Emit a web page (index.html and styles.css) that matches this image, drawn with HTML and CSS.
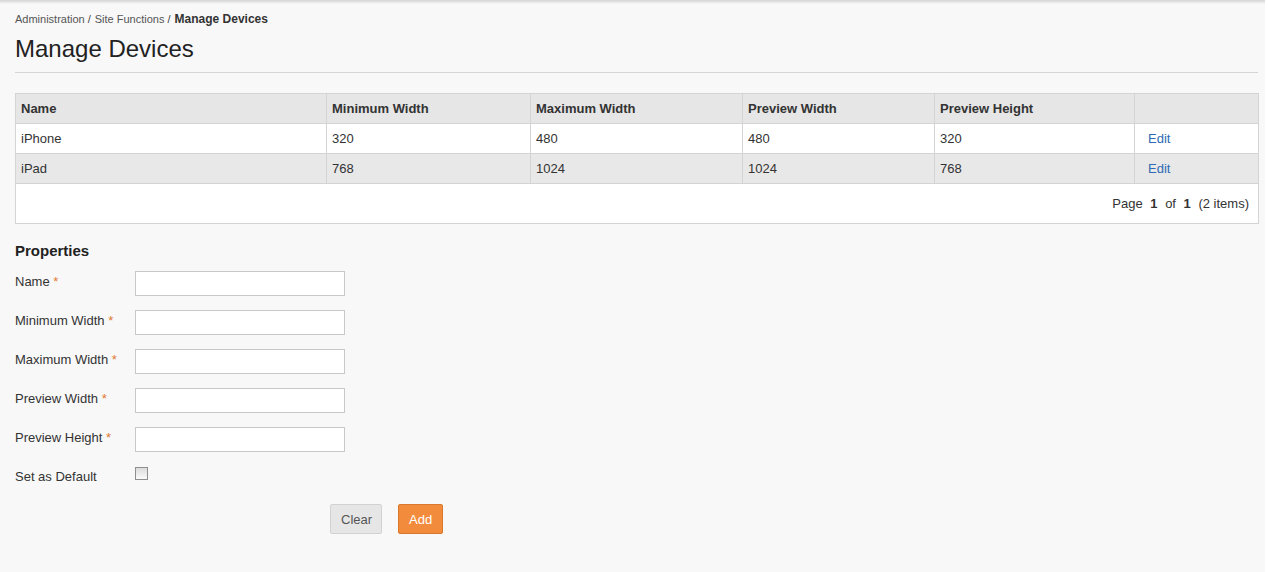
FILE: index.html
```html
<!DOCTYPE html>
<html>
<head>
<meta charset="utf-8">
<title>Manage Devices</title>
<link rel="stylesheet" href="styles.css">
</head>
<body>
<div class="page">
  <div class="crumbs"><a class="crumb">Administration</a><span class="sep">/</span><a class="crumb">Site Functions</a><span class="sep">/</span><span class="crumb-current">Manage Devices</span></div>
  <h1 class="title">Manage Devices</h1>
  <div class="rule"></div>

  <table class="grid">
    <thead>
      <tr>
        <th class="c1">Name</th>
        <th class="c2">Minimum Width</th>
        <th class="c3">Maximum Width</th>
        <th class="c4">Preview Width</th>
        <th class="c5">Preview Height</th>
        <th class="c6"></th>
      </tr>
    </thead>
    <tbody>
      <tr class="odd">
        <td>iPhone</td><td>320</td><td>480</td><td>480</td><td>320</td><td class="act"><a class="edit">Edit</a></td>
      </tr>
      <tr class="even">
        <td>iPad</td><td>768</td><td>1024</td><td>1024</td><td>768</td><td class="act"><a class="edit">Edit</a></td>
      </tr>
    </tbody>
    <tfoot>
      <tr>
        <td colspan="6" class="pager">Page <b>1</b> of <b>1</b> (2 items)</td>
      </tr>
    </tfoot>
  </table>

  <h2 class="section">Properties</h2>
  <div class="form">
    <div class="row"><label class="lbl">Name <span class="req">*</span></label><input class="field" type="text"></div>
    <div class="row"><label class="lbl">Minimum Width <span class="req">*</span></label><input class="field" type="text"></div>
    <div class="row"><label class="lbl">Maximum Width <span class="req">*</span></label><input class="field" type="text"></div>
    <div class="row"><label class="lbl">Preview Width <span class="req">*</span></label><input class="field" type="text"></div>
    <div class="row"><label class="lbl">Preview Height <span class="req">*</span></label><input class="field" type="text"></div>
    <div class="row check-row"><label class="lbl">Set as Default</label><span class="check"></span></div>
    <div class="actions">
      <button class="btn btn-clear">Clear</button>
      <button class="btn btn-add">Add</button>
    </div>
  </div>
</div>
</body>
</html>
```

FILE: styles.css
```css
html, body {
  margin: 0;
  padding: 0;
  background: #ffffff;
}
body {
  font-family: "Liberation Sans", Arial, sans-serif;
  color: #333;
}
.page {
  width: 1265px;
  min-height: 572px;
  box-sizing: border-box;
  padding: 12px 7px 0 15px;
  background: #f8f8f8 linear-gradient(#d4d4d4 0, #e6e6e6 2px, #f8f8f8 4px) no-repeat;
  background-size: 100% 4px;
  background-color: #f8f8f8;
}
.crumbs {
  font-size: 11px;
  line-height: 14px;
  height: 14px;
  color: #555;
}
.crumb { color: #555; }
.sep { margin: 0 4px 0 3px; color: #444; }
.crumb-current { font-weight: bold; color: #333; font-size: 12px; }
.title {
  margin: 9px 0 0 0;
  font-size: 24px;
  line-height: 28px;
  font-weight: normal;
  color: #222;
}
.rule {
  margin-top: 9px;
  border-top: 1px solid #d5d5d5;
}
.grid {
  margin-top: 20px;
  width: 1243px;
  border-collapse: collapse;
  font-size: 13px;
  table-layout: fixed;
}
.grid th, .grid td {
  border: 1px solid #d4d4d4;
  height: 30px;
  padding: 0 5px;
  text-align: left;
  color: #333;
  box-sizing: border-box;
}
.grid th { background: #e6e6e6; font-weight: bold; }
.c1 { width: 311px; }
.c2 { width: 204px; }
.c3 { width: 212px; }
.c4 { width: 192px; }
.c5 { width: 200px; }
.c6 { width: 124px; }
.odd td { background: #ffffff; }
.even td { background: #e8e8e8; }
.grid td.act { padding-left: 13px; }
.edit { color: #2e6bb3; }
.grid td.pager {
  background: #fff;
  height: 40px;
  text-align: right;
  padding-right: 9px;
  color: #333;
}
.pager b { margin: 0 4px; }
.section {
  margin: 18px 0 0 0;
  font-size: 15px;
  line-height: 18px;
  font-weight: bold;
  color: #222;
}
.form {
  margin-top: 11px;
  display: flex;
  flex-direction: column;
  gap: 14px;
}
.row {
  display: flex;
  align-items: center;
  height: 25px;
}
.lbl {
  width: 120px;
  font-size: 13px;
  color: #333;
  margin-top: -5px;
}
.req { color: #e07a30; }
.field {
  width: 210px;
  height: 25px;
  box-sizing: border-box;
  border: 1px solid #c8c8c8;
  background: #fff;
  margin: 0;
  padding: 0 4px;
}
.check-row { align-items: flex-start; }
.check-row .lbl { margin-top: 0; line-height: 16px; padding-top: 3px; }
.check {
  width: 13px;
  height: 13px;
  box-sizing: border-box;
  border: 1px solid #8f8f8f;
  background: linear-gradient(#dcdcdc, #fbfbfb);
  margin-top: 1px;
}
.actions {
  display: flex;
  gap: 16px;
  padding-left: 315px;
  margin-top: -1px;
}
.btn {
  height: 30px;
  box-sizing: border-box;
  font-family: "Liberation Sans", Arial, sans-serif;
  font-size: 13px;
  border-radius: 2px;
  padding: 0 10px;
  margin: 0;
}
.btn-clear {
  width: 52px;
  background: #e6e6e6;
  border: 1px solid #d2d2d2;
  color: #555;
}
.btn-add {
  width: 45px;
  background: #f28c3c;
  border: 1px solid #d9772d;
  color: #fff;
}
```
